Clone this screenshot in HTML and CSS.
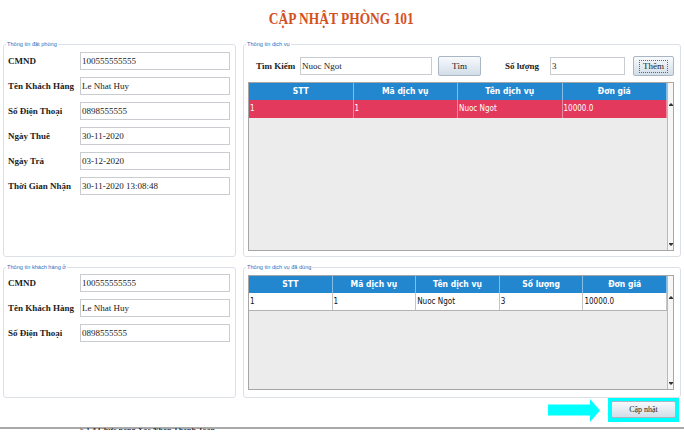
FILE: index.html
```html
<!DOCTYPE html>
<html lang="vi">
<head>
<meta charset="utf-8">
<title>Cập nhật phòng 101</title>
<link rel="stylesheet" href="styles.css">
</head>
<body>
<div class="page">
  <h1 class="title"><span>CẬP NHẬT PHÒNG 101</span></h1>

  <div class="grid">
    <fieldset class="box box-left box-top">
      <legend>Thông tin đặt phòng</legend>
      <div class="form">
        <div class="row"><label>CMND</label><div class="input">100555555555</div></div>
        <div class="row"><label>Tên Khách Hàng</label><div class="input">Le Nhat Huy</div></div>
        <div class="row"><label>Số Điện Thoại</label><div class="input">0898555555</div></div>
        <div class="row"><label>Ngày Thuê</label><div class="input">30-11-2020</div></div>
        <div class="row"><label>Ngày Trả</label><div class="input">03-12-2020</div></div>
        <div class="row"><label>Thời Gian Nhận</label><div class="input">30-11-2020 13:08:48</div></div>
      </div>
    </fieldset>

    <fieldset class="box box-right box-top">
      <legend>Thông tin dịch vụ</legend>
      <div class="search">
        <label class="lbl-find">Tìm Kiếm</label>
        <div class="input search-input">Nuoc Ngot</div>
        <button class="btn btn-find">Tìm</button>
        <label class="lbl-qty">Số lượng</label>
        <div class="input qty-input">3</div>
        <button class="btn btn-add"><span class="focus">Thêm</span></button>
      </div>
      <div class="table table-top">
        <div class="cells">
          <div class="thead cols4">
            <div>STT</div><div>Mã dịch vụ</div><div>Tên dịch vụ</div><div>Đơn giá</div>
          </div>
          <div class="trow selected cols4">
            <div>1</div><div>1</div><div>Nuoc Ngot</div><div>10000.0</div>
          </div>
        </div>
        <div class="scroll"><span class="arr-up"></span><span class="arr-down"></span></div>
      </div>
    </fieldset>

    <fieldset class="box box-left box-bottom">
      <legend>Thông tin khách hàng ở</legend>
      <div class="form">
        <div class="row"><label>CMND</label><div class="input">100555555555</div></div>
        <div class="row"><label>Tên Khách Hàng</label><div class="input">Le Nhat Huy</div></div>
        <div class="row"><label>Số Điện Thoại</label><div class="input">0898555555</div></div>
      </div>
    </fieldset>

    <fieldset class="box box-right box-bottom">
      <legend>Thông tin dịch vụ đã dùng</legend>
      <div class="table table-bottom">
        <div class="cells">
          <div class="thead cols5">
            <div>STT</div><div>Mã dịch vụ</div><div>Tên dịch vụ</div><div>Số lượng</div><div>Đơn giá</div>
          </div>
          <div class="trow plain cols5">
            <div>1</div><div>1</div><div>Nuoc Ngot</div><div>3</div><div>10000.0</div>
          </div>
        </div>
        <div class="scroll"><span class="arr-up"></span><span class="arr-down"></span></div>
      </div>
    </fieldset>
  </div>

  <div class="footer">
    <svg class="arrow" width="52" height="23" viewBox="0 0 52 23" aria-hidden="true">
      <polygon points="0,5.5 42,5.5 42,0 52,11.5 42,23 42,16.5 0,16.5" fill="#00ffff"/>
    </svg>
    <div class="hl"><button class="btn btn-save">Cập nhật</button></div>
  </div>

  <div class="doc-edge"></div>
  <div class="doc-text">5.1.4 Chức năng Xác Nhận Thanh Toán</div>
</div>
</body>
</html>
```

FILE: styles.css
```css
html, body {
  margin: 0;
  padding: 0;
  background: #ffffff;
}

body {
  width: 684px;
  height: 434px;
  overflow: hidden;
}

.page {
  padding: 0 4px 0 3px;
}

.title {
  margin: 0;
  height: 41px;
  box-sizing: border-box;
  padding-top: 9px;
  text-align: center;
  font: bold 16px/20px "Liberation Serif", serif;
  color: #d4511f;
}

.title span {
  display: inline-block;
  transform: scaleX(0.84);
}

.grid {
  display: grid;
  grid-template-columns: 233px 438px;
  grid-template-rows: 216px 134px;
  column-gap: 7px;
  row-gap: 7px;
}

.box {
  margin: 0;
  min-width: 0;
  height: 100%;
  box-sizing: border-box;
  border: 1px solid #dbe0e6;
  border-radius: 3px;
}

.box legend {
  font: 5.6px/7px "Liberation Sans", sans-serif;
  color: #2a6fbf;
  padding: 0 1px;
  margin-left: -2px;
}

.box-left {
  padding: 4px 5px 0 4px;
}

.box-left.box-bottom {
  padding-top: 3px;
}

.box-right.box-top {
  padding: 8px 6px 0 4px;
}

.box-right.box-bottom {
  padding: 4px 6px 0 4px;
}

.form {
  display: flex;
  flex-direction: column;
  gap: 7px;
}

.row {
  display: flex;
  align-items: center;
  height: 18px;
}

.row label,
.search label {
  font: bold 9px/12px "Liberation Serif", serif;
  color: #1c1c1c;
  white-space: nowrap;
}

.row label {
  width: 72px;
  flex: none;
}

.input {
  flex: 1;
  height: 18px;
  box-sizing: border-box;
  border: 1px solid #c9cdd2;
  background: #ffffff;
  font: 9px/17px "Liberation Serif", serif;
  color: #222222;
  padding-left: 1px;
  white-space: nowrap;
  overflow: hidden;
}

.search {
  display: flex;
  align-items: center;
  height: 20px;
  padding-left: 8px;
  margin-bottom: 6px;
}

.lbl-find {
  width: 44px;
  flex: none;
}

.search-input {
  flex: none;
  width: 132px;
}

.btn {
  box-sizing: border-box;
  border: 1px solid #a9b6c4;
  border-radius: 2px;
  background: linear-gradient(#f8fafc, #d2dde8);
  font: 9px/1 "Liberation Serif", serif;
  color: #222222;
  padding: 0;
  margin: 0;
}

.btn-find {
  width: 44px;
  height: 20px;
  margin-left: 6px;
}

.lbl-qty {
  width: 45px;
  flex: none;
  margin-left: 24px;
}

.qty-input {
  flex: none;
  width: 75px;
}

.btn-add {
  width: 42px;
  height: 20px;
  margin-left: 8px;
}

.btn-add .focus {
  display: inline-block;
  outline: 1px dotted #666666;
  padding: 1px 3px;
}

.table {
  display: flex;
  box-sizing: border-box;
  border: 1px solid #a6a6a6;
  background: #ececec;
}

.table-top {
  height: 169px;
}

.table-bottom {
  height: 115px;
}

.cells {
  flex: 1;
  min-width: 0;
}

.cols4 {
  display: grid;
  grid-template-columns: repeat(4, 1fr);
}

.cols5 {
  display: grid;
  grid-template-columns: repeat(5, 1fr);
}

.thead {
  height: 17px;
  background: #2387d0;
  color: #ffffff;
  font: bold 8.5px/17px "DejaVu Sans Condensed", "DejaVu Sans", sans-serif;
  text-align: center;
}

.thead div {
  border-right: 1px solid #86bde6;
}

.trow {
  font: 8px/17px "DejaVu Sans Condensed", "DejaVu Sans", sans-serif;
}

.trow div {
  padding-left: 1px;
  white-space: nowrap;
  overflow: hidden;
}

.trow.selected {
  height: 18px;
  line-height: 18px;
  background: #e2395c;
  color: #ffffff;
}

.trow.selected div {
  border-right: 1px solid #ec8aa0;
}

.trow.plain {
  height: 17px;
  background: #ffffff;
  color: #111111;
  border-bottom: 1px solid #b3b3b3;
}

.trow.plain div {
  border-right: 1px solid #c4c4c4;
}

.scroll {
  width: 5px;
  flex: none;
  border-left: 1px solid #b9b9b9;
  background: #f6f6f6;
  display: flex;
  flex-direction: column;
  justify-content: space-between;
  align-items: center;
  padding: 20px 0 4px;
}

.arr-up {
  width: 0;
  height: 0;
  border-left: 2px solid transparent;
  border-right: 2px solid transparent;
  border-bottom: 2px solid #333333;
  box-shadow: 0 1px 0 #333333;
}

.arr-down {
  width: 0;
  height: 0;
  border-left: 2px solid transparent;
  border-right: 2px solid transparent;
  border-top: 2px solid #333333;
  box-shadow: 0 -1px 0 #333333;
}

.footer {
  display: flex;
  justify-content: flex-end;
  align-items: center;
  height: 24px;
  padding-right: 1px;
}

.arrow {
  display: block;
  margin-right: 8px;
}

.hl {
  background: #00ffff;
  padding: 3px 3px 4px;
}

.btn-save {
  display: block;
  width: 65px;
  height: 17px;
  font-size: 8px;
}

.doc-edge {
  margin: 5px -4px 0 -3px;
  height: 2px;
  background: #a9a9a9;
}

.doc-text {
  margin-top: -1px;
  height: 2px;
  overflow: hidden;
  padding-left: 77px;
  font: bold 8px/5px "Liberation Serif", serif;
  color: #333333;
  white-space: nowrap;
}
```
